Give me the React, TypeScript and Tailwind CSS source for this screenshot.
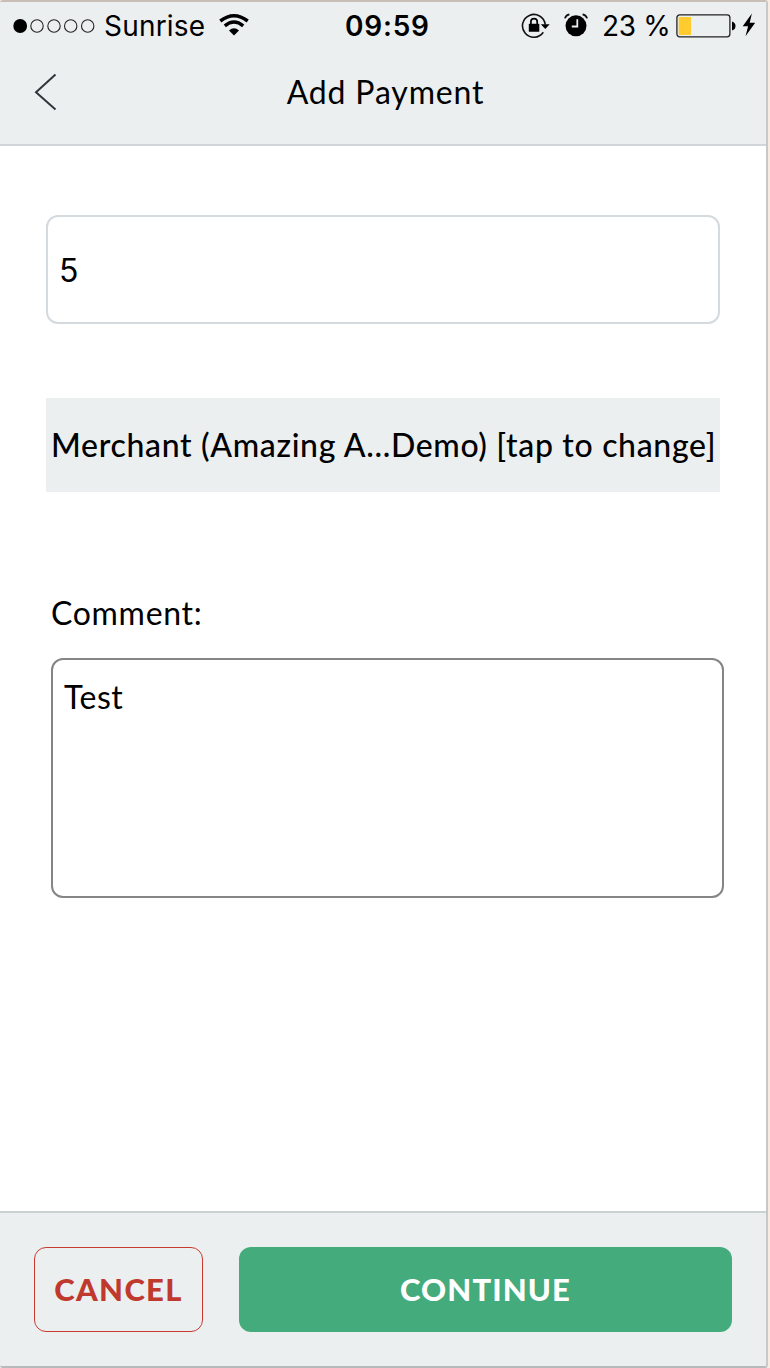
import React from "react";

function Signal() {
  return (
    <svg width="83" height="16" viewBox="0 0 83 16" className="shrink-0">
      <circle cx="7.2" cy="8" r="6.9" fill="#000" />
      {[24, 41, 57.7, 74.7].map((cx) => (
        <circle key={cx} cx={cx} cy="8" r="6.2" fill="none" stroke="#222" strokeWidth="1.1" />
      ))}
    </svg>
  );
}

function Wifi() {
  return (
    <svg width="30" height="22" viewBox="0 0 30 22" className="shrink-0">
      <path d="M1.300 7 Q15 -3.400 28.700 7" fill="none" stroke="#000" strokeWidth="3.500" />
      <path d="M5.800 11.900 Q15 4.300 24.200 11.900" fill="none" stroke="#000" strokeWidth="3.400" />
      <path d="M10 16.600 Q15 11.900 20 16.600 L15 21.500 Z" fill="#000" />
    </svg>
  );
}

function RotationLock() {
  return (
    <svg width="29" height="26" viewBox="0 0 29 26" className="shrink-0">
      <path d="M24.200 11.500 A11.400 11.400 0 1 0 22.300 19.300" fill="none" stroke="#111" strokeWidth="1.600" />
      <path d="M19.800 11.200 H28.700 L24.300 15.900 Z" fill="#000" />
      <rect x="7.800" y="10.800" width="10.500" height="8" rx="0.600" fill="#000" />
      <path d="M9.900 11 V8.800 A3.150 3.150 0 0 1 16.200 8.800 V11" fill="none" stroke="#000" strokeWidth="1.700" />
    </svg>
  );
}

function Alarm() {
  return (
    <svg width="24" height="24" viewBox="0 0 24 24" className="shrink-0">
      <circle cx="12" cy="12.800" r="10.500" fill="#000" />
      <path d="M0.900 5.400 Q1.800 2 5.400 1.300 M23.100 5.400 Q22.200 2 18.600 1.300" fill="none" stroke="#111" strokeWidth="1.700" />
      <path d="M13.300 6.300 V13.500 H7.800" fill="none" stroke="#ebeff0" strokeWidth="1.800" />
    </svg>
  );
}

function Battery() {
  return (
    <svg width="60" height="24" viewBox="0 0 60 24" className="shrink-0">
      <rect x="0.900" y="0.900" width="53" height="22" rx="2.800" fill="none" stroke="#222" strokeWidth="1.300" />
      <path d="M3.500 3 H15 V21 H3.500 Q2.700 21 2.700 20.200 V3.800 Q2.700 3 3.500 3 Z" fill="#ffcb2f" />
      <path d="M56 7.500 Q59.500 8.500 59.500 12 Q59.500 15.500 56 16.500 Z" fill="#000" />
    </svg>
  );
}

function Bolt() {
  return (
    <svg width="14" height="24" viewBox="0 0 14 24" className="shrink-0">
      <path d="M9.900 0.500 L0.700 13.200 H6.100 L3.500 23.200 L13.200 9.700 H7.700 Z" fill="#000" />
    </svg>
  );
}

export default function App() {
  return (
    <div className="flex h-[1368px] w-[770px] bg-[#f8ebe1] font-['Lato',sans-serif] text-black">
      <div className="flex h-full w-[768px] flex-col overflow-hidden rounded-[3px] border-t-2 border-r-2 border-b-2 border-t-[#c9beb6] border-r-[#c8c8c8] border-b-[#b6baba] bg-white">
        <header className="flex h-[144px] shrink-0 flex-col border-b-2 border-[#d2d6da] bg-[#ebeff0]">
          <div className="grid h-[48px] grid-cols-[345px_175px_1fr] items-center font-['Inter',sans-serif] text-[28px] leading-[48px]">
            <div className="flex items-center pl-[13px]">
              <Signal />
              <span className="ml-[8px] w-[115px] whitespace-nowrap tracking-[0.2px]">Sunrise</span>
              <span className="flex pb-[2px]"><Wifi /></span>
            </div>
            <div className="whitespace-nowrap font-semibold tracking-[0.8px]">09:59</div>
            <div className="flex items-center">
              <span className="ml-px flex pb-px"><RotationLock /></span>
              <span className="ml-[14px] flex pb-[2px]"><Alarm /></span>
              <span className="ml-[14px] w-[74px] whitespace-nowrap tracking-[-0.3px]">23 %</span>
              <Battery />
              <span className="ml-[6px] flex pb-[2px]"><Bolt /></span>
            </div>
          </div>
          <div className="relative flex h-[84px] items-center justify-center">
            <button aria-label="Back" className="absolute top-[23px] left-[34px]">
              <svg width="23" height="38" viewBox="0 0 23 38">
                <path d="M21.500 1.500 L2 19.300 L21.500 36.500" fill="none" stroke="#32363b" strokeWidth="2" />
              </svg>
            </button>
            <h1 className="pl-[5px] text-[32px] leading-[40px] tracking-[0.85px]">Add Payment</h1>
          </div>
        </header>

        <main className="flex flex-1 flex-col pl-[46px]">
          <div className="mt-[69px] flex h-[109px] w-[674px] items-center rounded-xl border-2 border-[#d5dade] pt-[2px] pl-[11px] font-['Inter',sans-serif] text-[32px]">
            5
          </div>
          <div className="mt-[74px] flex h-[94px] w-[674px] items-center bg-[#ebeff0] pl-[5px] text-[32px] font-medium tracking-[0.67px] whitespace-nowrap">
            Merchant (Amazing A...Demo) [tap to change]
          </div>
          <label className="mt-[101px] ml-[5px] text-[32px] leading-[40px] tracking-[0.7px]">Comment:</label>
          <div className="mt-[25px] ml-[5px] h-[240px] w-[673px] rounded-xl border-2 border-[#858585] pt-[17px] pl-[11px] text-[32px] leading-[40px] tracking-[0.5px]">
            Test
          </div>
        </main>

        <footer className="flex h-[155px] shrink-0 gap-[36px] border-t-2 border-[#cbd0d2] bg-[#ebeff0] pt-[34px] pl-[34px]">
          <button className="h-[85px] w-[169px] rounded-xl border border-[#c73a31] text-[31px] font-black tracking-[1.3px] text-[#c0392f]">
            CANCEL
          </button>
          <button className="h-[85px] w-[493px] rounded-xl bg-[#44ab7c] text-[31px] font-black tracking-[1.1px] text-white">
            CONTINUE
          </button>
        </footer>
      </div>
    </div>
  );
}
